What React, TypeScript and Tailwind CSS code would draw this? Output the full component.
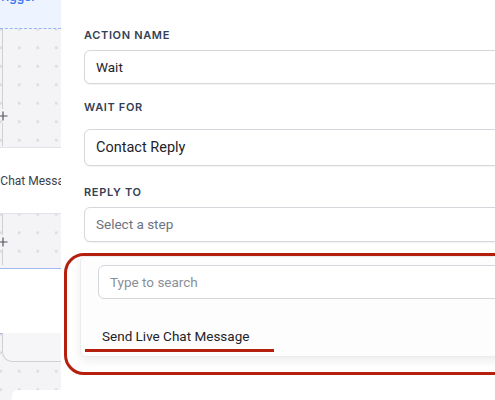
import React from "react";

const dots =
  "bg-[#f4f4f6] bg-[radial-gradient(circle,#dcdce0_1.2px,transparent_1.6px)] bg-[length:18.5px_18.5px] bg-[position:10px_-9px]";

const body = "font-['Roboto',sans-serif]";

function Label({ children, className = "" }: { children: React.ReactNode; className?: string }) {
  return (
    <div
      className={`h-[14px] text-[11px] leading-[14px] font-semibold uppercase tracking-[0.06em] text-[#344054] ${className}`}
    >
      {children}
    </div>
  );
}

function Field({
  value,
  placeholder,
  className = "",
}: {
  value?: string;
  placeholder?: string;
  className?: string;
}) {
  return (
    <div
      className={`w-[440px] flex items-center px-[11px] rounded-md border border-[#d5d7dd] bg-white shadow-[0_1px_1px_rgba(16,24,40,0.05)] ${body} ${className}`}
    >
      {value ? (
        <span className="text-[#1f2328]">{value}</span>
      ) : (
        <span className="text-[#6b7280]">{placeholder}</span>
      )}
    </div>
  );
}

function PlusMark() {
  return (
    <svg width="10" height="10" viewBox="0 0 10 10" className="shrink-0 my-[2px]">
      <path d="M5 0.5v9M0.5 5h9" stroke="#55555e" strokeWidth="1.2" />
    </svg>
  );
}

// connector with a "+" between two line segments
function Connector({ top, bottom }: { top: number; bottom: number }) {
  return (
    <div className="w-[4px] h-full flex flex-col items-center">
      <div className="w-[1.5px] bg-[#cfcfd4]" style={{ height: top }} />
      <PlusMark />
      <div className="w-[1.5px] bg-[#cfcfd4]" style={{ height: bottom }} />
    </div>
  );
}

// left strip: a slice of the flow canvas
function Canvas() {
  return (
    <div className="w-[61px] h-full shrink-0 overflow-hidden flex flex-col">
      {/* trigger node, cut off at the top */}
      <div className="h-[29px] shrink-0 bg-[#eef4ff] border-b border-dashed border-[#93b4f5] overflow-hidden">
        <div className="-mt-[12px] -ml-[6px] text-[12px] font-semibold text-[#3b7cf0]">Trigger</div>
      </div>

      <div className={`h-[119px] shrink-0 ${dots} border-b border-[#e3e3e7] pl-[0.5px]`}>
        <Connector top={80} bottom={23} />
      </div>

      {/* node: Send Live Chat Message */}
      <div className="h-[65px] shrink-0 bg-white flex items-center">
        <span className={`-ml-[54px] whitespace-nowrap text-[12px] text-[#3a3f48] ${body}`}>
          Send Live Chat Message
        </span>
      </div>

      <div className={`h-[55px] shrink-0 ${dots} border-t border-[#e3e3e7] pl-[0.5px]`}>
        <Connector top={21} bottom={16} />
      </div>

      {/* selected node */}
      <div className="h-[66px] shrink-0 bg-white border-y border-[#9dbaf3]" />

      <div className={`flex-1 ${dots} flex flex-col`}>
        <div className="ml-[1.5px] -mt-px w-[80px] h-[29px] rounded-bl-[10px] border-l-[1.5px] border-b-[1.5px] border-[#cfcfd4] bg-[#f6f6f8]" />
        <div className="mt-auto ml-[12px] w-[80px] h-[10px] rounded-tl-md bg-white" />
      </div>
    </div>
  );
}

export default function App() {
  return (
    <div className="w-[495px] h-[400px] overflow-hidden flex bg-white font-['Inter',sans-serif]">
      <Canvas />

      <div className="flex-1 flex flex-col pl-[23px] pt-[28px]">
        <Label>Action Name</Label>
        <Field value="Wait" className="mt-2 h-[34px] text-[13.5px]" />

        <Label className="mt-4">Wait For</Label>
        <Field value="Contact Reply" className="mt-[15px] h-[37px] text-[14.5px]" />

        <Label className="mt-[19px]">Reply To</Label>
        <Field placeholder="Select a step" className="mt-2 h-[35px] text-[13.5px]" />

        {/* highlighted dropdown */}
        <div className="mt-[11px] -ml-[20px] w-[460px] rounded-[20px] border-[3.5px] border-[#b5200e] pl-[13px] pb-[15px]">
          <div className="w-[440px] rounded-md bg-[#fdfdfd] border border-[#ececef] shadow-[0_4px_10px_rgba(16,24,40,0.08)] px-[17px] pt-[8px] pb-[4px]">
            <div
              className={`h-[34px] w-[420px] flex items-center px-[11px] rounded-md border border-[#d5d7dd] bg-white text-[13.5px] text-[#8a8f98] ${body}`}
            >
              Type to search
            </div>
            <div className={`mt-[27px] pl-[4px] text-[13.5px] leading-[20px] text-[#1f2328] ${body}`}>
              Send Live Chat Message
            </div>
            {/* annotation underline */}
            <div className="mt-[3px] -ml-[13px] w-[189px] h-[3px] bg-[#b5200e]" />
          </div>
        </div>
      </div>
    </div>
  );
}
